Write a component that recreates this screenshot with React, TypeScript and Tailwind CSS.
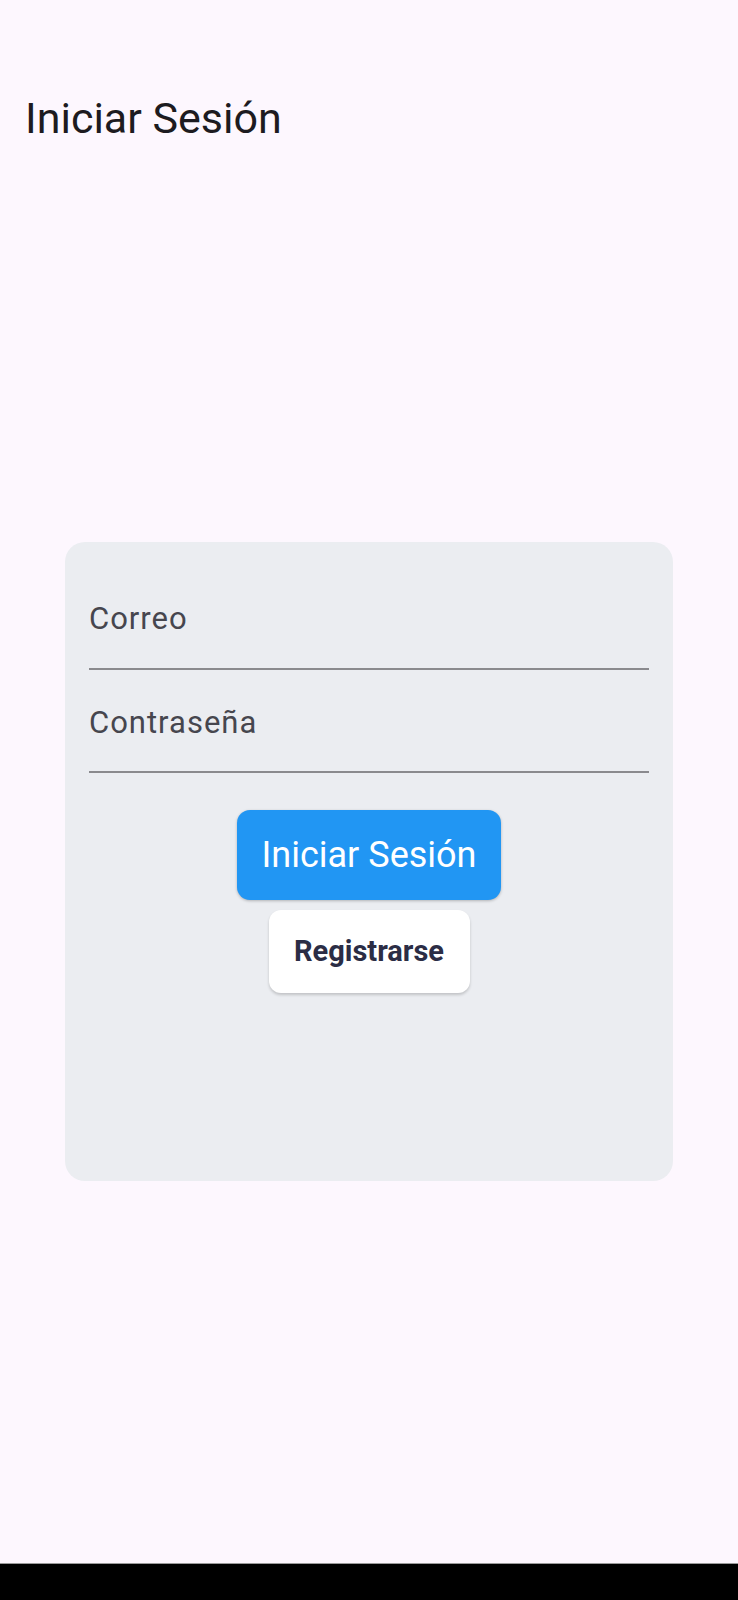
import React from "react";

export default function App() {
  return (
    <div className="w-[738px] h-[1600px] bg-[#fdf7fe] flex flex-col overflow-hidden" style={{ fontFamily: "Roboto, 'Noto Sans', sans-serif" }}>
      <div className="flex-1 flex flex-col">
        <div className="pt-[93px] pl-[25px]">
          <h1 className="text-[43px] leading-[50px] font-normal text-[#1d1b20]">Iniciar Sesión</h1>
        </div>
        <div className="mt-[399px] ml-[65px] w-[608px] h-[639px] rounded-[20px] bg-[#ebedf1] px-[24px] pt-[25px] flex flex-col">
          <div className="h-[103px] border-b-2 border-[#8a8a8e] pt-[32px]">
            <span className="text-[31px] leading-[40px] tracking-[1px] text-[#46464e]">Correo</span>
          </div>
          <div className="h-[103px] border-b-2 border-[#8a8a8e] pt-[33px]">
            <span className="text-[31px] leading-[40px] tracking-[1px] text-[#46464e]">Contraseña</span>
          </div>
          <div className="flex flex-col items-center mt-[37px] gap-[10px]">
            <button className="w-[264px] h-[90px] rounded-[13px] bg-[#2196f3] text-white text-[36px] font-normal shadow-[0_1px_3px_rgba(0,0,0,0.25)] flex items-center justify-center">
              Iniciar Sesión
            </button>
            <button className="w-[201px] h-[83px] rounded-[12px] bg-white text-[#2b2d45] text-[29px] font-bold shadow-[0_2px_3px_rgba(0,0,0,0.18)] flex items-center justify-center">
              Registrarse
            </button>
          </div>
        </div>
      </div>
      <div className="h-[37px] bg-black border-t border-[#9a9a9a]" />
    </div>
  );
}
